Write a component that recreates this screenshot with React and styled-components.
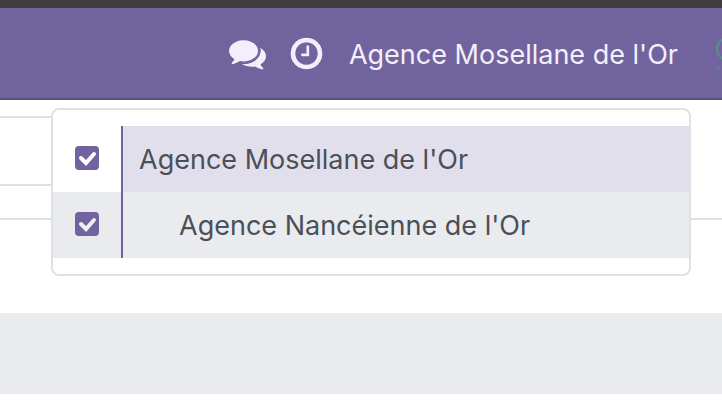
import React from "react";
import styled, { createGlobalStyle } from "styled-components";

const GlobalStyle = createGlobalStyle`
  * { box-sizing: border-box; }
  body {
    margin: 0;
    background: #ffffff;
    font-family: Inter, "Liberation Sans", sans-serif;
    font-size: 27px;
    color: #4b4f58;
  }
`;

const Page = styled.div`
  overflow: hidden;
`;

const WindowStrip = styled.div`
  height: 8px;
  background: #3d3d3d;
`;

const Navbar = styled.header`
  display: flex;
  align-items: center;
  justify-content: flex-end;
  height: 92px;
  background: #71639e;
  border-bottom: 2px solid #5a4f7f;
`;

const NavButton = styled.button`
  display: flex;
  flex: none;
  align-items: center;
  padding: 0 12px 0 10px;
  border: 0;
  background: transparent;
  color: #f3effa;
  font: inherit;
  line-height: 40px;
  white-space: nowrap;
  cursor: pointer;
`;

const CompanyButton = styled(NavButton)`
  padding: 4px 36px 0 12px;
`;

const NavIcon = styled.svg`
  display: block;
  width: 37px;
  height: 37px;
  fill: currentColor;
`;

const AvatarClip = styled.span`
  display: block;
  flex: none;
  width: 8px;
  height: 40px;
  overflow: hidden;
`;

const Avatar = styled.svg`
  display: block;
  width: 40px;
  height: 40px;
`;

const Content = styled.main`
  position: relative;
  padding-top: 16px;
`;

const SearchPanel = styled.div`
  width: 50%;
  height: 70px;
  border: 2px solid #dfe2e3;
  border-left: 0;
`;

const Sheet = styled.div`
  height: 95px;
  margin-top: 32px;
  border-top: 2px solid #dfe2e3;
`;

const Band = styled.div`
  height: 81px;
  background: #e9ebef;
`;

const Menu = styled.div`
  position: absolute;
  top: 8px;
  left: 51px;
  right: 31px;
  padding: 16px 0;
  background: #ffffff;
  border: 2px solid #dfe2e3;
  border-radius: 8px;
`;

const CompanyRow = styled.label`
  display: flex;
  height: 66px;
  background: ${(p) => (p.$hovered ? "#e9ebef" : "#ffffff")};
  cursor: pointer;
`;

const CheckCell = styled.span`
  display: flex;
  flex: none;
  align-items: center;
  justify-content: center;
  width: 68px;
  padding-bottom: 2px;
`;

const CheckHolder = styled.span`
  display: grid;
  width: 24px;
  height: 24px;

  & > * {
    grid-area: 1 / 1;
  }
`;

const Checkbox = styled.input`
  appearance: none;
  width: 24px;
  height: 24px;
  margin: 0;
  border: 2px solid #71639e;
  border-radius: 4px;

  &:checked {
    background: #71639e;
  }

  &:not(:checked) + svg {
    visibility: hidden;
  }
`;

const CheckMark = styled.svg`
  width: 24px;
  height: 24px;
  fill: none;
  stroke: ${(p) => (p.$hovered ? "#eeeef4" : "#ffffff")};
  stroke-width: 4;
  stroke-linecap: round;
  pointer-events: none;
`;

const CompanyName = styled.span`
  flex: 1;
  min-width: 0;
  padding: 2px 0 0 ${(p) => (p.$level ? 56 : 16)}px;
  border-left: 2px solid #71639e;
  background: ${(p) => (p.$current ? "#e2dfec" : "transparent")};
  line-height: 64px;
  white-space: nowrap;
`;

const companies = [
  { name: "Agence Mosellane de l'Or", level: 0, current: true },
  { name: "Agence Nancéienne de l'Or", level: 1, hovered: true },
];

export default function App() {
  return (
    <Page>
      <GlobalStyle />
      <WindowStrip />
      <Navbar>
        <NavButton type="button" aria-label="Messages">
          <NavIcon viewBox="0 0 1792 1792" aria-hidden="true">
            <path d="M1408 768q0 139-94 257t-256.5 186.5-353.5 68.5q-86 0-176-16-124 88-278 128-36 9-86 16h-3q-11 0-20.5-8t-11.5-21q-1-3-1-6.5t.5-6.5 2-6l2.5-5t3.5-5.5 4-5 4.5-5 4-4.5q5-6 23-25t26-29.5 22.5-29 25-38.5 20.5-44q-124-72-195-177t-71-224q0-139 94-257t256.5-186.5 353.5-68.5 353.5 68.5 256.5 186.5 94 257zm384 256q0 120-71 224.5t-195 176.5q10 24 20.5 44t25 38.5 22.5 29 26 29.5 23 25q1 1 4 4.5t4.5 5 4 5 3.5 5.5l2.5 5t2 6 .5 6.5-1 6.5q-3 14-13 22t-22 7q-50-7-86-16-154-40-278-128-90 16-176 16-271 0-472-132 58 4 88 4 161 0 309-45t264-129q125-92 192-212t67-254q0-77-23-152 129 71 204 178t75 230z" />
          </NavIcon>
        </NavButton>
        <NavButton type="button" aria-label="Activities">
          <NavIcon viewBox="0 0 1792 1792" aria-hidden="true">
            <path d="M1024 544v448q0 14-9 23t-23 9h-320q-14 0-23-9t-9-23v-64q0-14 9-23t23-9h224v-352q0-14 9-23t23-9h64q14 0 23 9t9 23zm416 352q0-148-73-273t-198-198-273-73-273 73-198 198-73 273 73 273 198 198 273 73 273-73 198-198 73-273zm224 0q0 209-103 385.5t-279.5 279.5-385.5 103-385.5-103-279.5-279.5-103-385.5 103-385.5 279.5-279.5 385.5-103 385.5 103 279.5 279.5 103 385.5z" />
          </NavIcon>
        </NavButton>
        <CompanyButton type="button">Agence Mosellane de l'Or</CompanyButton>
        <AvatarClip>
          <Avatar viewBox="0 0 40 40" aria-hidden="true">
            <circle cx="14" cy="16" r="11" fill="none" stroke="#569088" strokeWidth="2" />
            <path d="M2 38l2-5 2 5M3 36h2" fill="none" stroke="#5a8590" />
          </Avatar>
        </AvatarClip>
      </Navbar>
      <Content>
        <SearchPanel />
        <Sheet />
        <Band />
        <Menu>
          {companies.map((c) => (
            <CompanyRow key={c.name} $hovered={c.hovered}>
              <CheckCell>
                <CheckHolder>
                  <Checkbox type="checkbox" defaultChecked />
                  <CheckMark viewBox="0 0 24 24" $hovered={c.hovered} aria-hidden="true">
                    <path d="M6 12l5 5 8-9" />
                  </CheckMark>
                </CheckHolder>
              </CheckCell>
              <CompanyName $level={c.level} $current={c.current}>
                {c.name}
              </CompanyName>
            </CompanyRow>
          ))}
        </Menu>
      </Content>
    </Page>
  );
}
